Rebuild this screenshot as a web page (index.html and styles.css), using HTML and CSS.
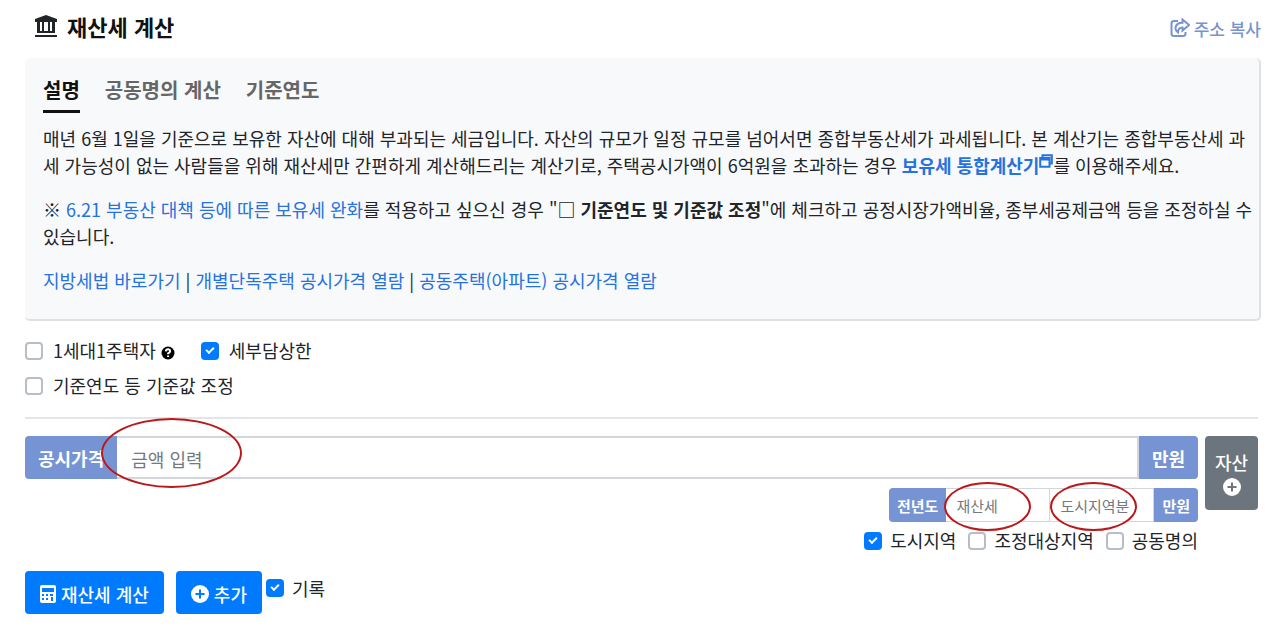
FILE: index.html
```html
<!DOCTYPE html>
<html lang="ko">

<head>
    <meta charset="UTF-8">
    <meta name="viewport" content="width=device-width, initial-scale=1.0">
    <title>재산세 계산</title>
    <link rel="stylesheet" href="styles.css">
</head>

<body>
    <header class="top">
        <h1>
            <svg class="icon-bank" viewBox="0 0 24 24" width="24" height="24" aria-hidden="true">
                <path d="M12 1 1 5v3h22V5zM3 8h3v9H3zM8 8h2v9H8zM14 8h2v9h-2zM18 8h3v9h-3zM3 17h18v2H3zM1 21h22v2H1z" />
            </svg>
            재산세 계산
        </h1>
        <a href="#" class="copy">
            <svg viewBox="0 0 20 20" width="20" height="20" aria-hidden="true">
                <path d="M8 3H4Q1.500 3 1.500 5.500V15.500Q1.500 18 4 18H13Q15.500 18 15.500 15.500V14M12.500 1.500 19 7l-6.500 5.500V9.500Q8 9.500 8 14.500 5 12.500 5.500 9.500 6.500 4.800 12.500 4.800Z" />
            </svg>
            주소 복사
        </a>
    </header>

    <section class="panel">
        <nav class="tabs">
            <a href="#" class="active">설명</a>
            <a href="#">공동명의 계산</a>
            <a href="#">기준연도</a>
        </nav>
        <p>매년 6월 1일을 기준으로 보유한 자산에 대해 부과되는 세금입니다. 자산의 규모가 일정 규모를 넘어서면 종합부동산세가 과세됩니다. 본 계산기는 종합부동산세 과세 가능성이 없는 사람들을 위해 재산세만 간편하게 계산해드리는 계산기로, 주택공시가액이 6억원을 초과하는 경우 <a href="#"><strong>보유세 통합계산기</strong><svg class="icon-window" viewBox="0 0 14 14" width="14" height="14" aria-hidden="true"><path d="M3.500 3.500V1.200h9.300V9.500h-2.300M1.200 4h9.300v8.800H1.200zM1.200 5.500h9.300" /></svg></a>를 이용해주세요.</p>
        <p>※ <a href="#">6.21 부동산 대책 등에 따른 보유세 완화</a>를 적용하고 싶으신 경우 "<strong>□ 기준연도 및 기준값 조정</strong>"에 체크하고 공정시장가액비율, 종부세공제금액 등을 조정하실 수 있습니다.</p>
        <p><a href="#">지방세법 바로가기</a> | <a href="#">개별단독주택 공시가격 열람</a> | <a href="#">공동주택(아파트) 공시가격 열람</a></p>
    </section>

    <form>
        <div class="options">
            <div class="row">
                <label class="check"><input type="checkbox"> 1세대1주택자
                    <svg class="icon-help" viewBox="0 0 14 14" width="14" height="14" aria-hidden="true">
                        <circle cx="7" cy="7" r="6.500" />
                        <path d="M4.800 5.300Q5 3.300 7 3.300T9.100 5.200Q9.100 6.400 7.100 7.300V8.300M7.100 9.500V11" />
                    </svg>
                </label>
                <label class="check"><input type="checkbox" checked> 세부담상한</label>
            </div>
            <div class="row">
                <label class="check"><input type="checkbox"> 기준연도 등 기준값 조정</label>
            </div>
        </div>

        <div class="asset">
            <div class="fields">
                <div class="group">
                    <label for="price" class="addon">공시가격</label>
                    <div class="field mark mark-price"><input type="text" id="price" placeholder="금액 입력"></div>
                    <span class="addon">만원</span>
                </div>
                <div class="group small">
                    <label for="prevTax" class="addon">전년도</label>
                    <div class="field mark mark-tax"><input type="text" id="prevTax" placeholder="재산세"></div>
                    <div class="field mark mark-city"><input type="text" id="prevCity" placeholder="도시지역분" aria-label="도시지역분"></div>
                    <span class="addon">만원</span>
                </div>
                <div class="area">
                    <label class="check"><input type="checkbox" checked> 도시지역</label>
                    <label class="check"><input type="checkbox"> 조정대상지역</label>
                    <label class="check"><input type="checkbox"> 공동명의</label>
                </div>
            </div>
            <button type="button" class="btn-asset">자산
                <svg class="icon-plus" viewBox="0 0 18 18" width="18" height="18" aria-hidden="true">
                    <circle cx="9" cy="9" r="9" />
                    <path d="M9 4.500v9M4.500 9h9" />
                </svg>
            </button>
        </div>

        <div class="actions">
            <button type="button" class="btn">
                <svg class="icon-calc" viewBox="0 0 16 18" width="16" height="18" aria-hidden="true">
                    <path fill-rule="evenodd" d="M2 0h12q2 0 2 2v14q0 2-2 2H2q-2 0-2-2V2Q0 0 2 0zM2 3v4h12V3zM2 9v2h2V9zM6 9v2h2V9zM10 9v2h3V9zM2 13v2h2v-2zM6 13v2h2v-2zM11 12v4h2v-4z" />
                </svg>
                재산세 계산
            </button>
            <button type="button" class="btn">
                <svg class="icon-plus" viewBox="0 0 18 18" width="18" height="18" aria-hidden="true">
                    <circle cx="9" cy="9" r="9" />
                    <path d="M9 4.500v9M4.500 9h9" />
                </svg>
                추가
            </button>
            <label class="check"><input type="checkbox" checked> 기록</label>
        </div>
    </form>
</body>

</html>
```
FILE: styles.css
```css
* {
    box-sizing: border-box;
}

body {
    background-color: white;
    color: #212529;
    font-family: "Noto Sans CJK KR", sans-serif;
    font-size: 18px;
    line-height: 27px;
    margin: 0;
    padding: 12px 19px 16px 25px;
}

a {
    color: #2672df;
    text-decoration: none;
}

input, button {
    font-family: inherit;
}

/* Título */
.top {
    align-items: center;
    display: flex;
    height: 46px;
    justify-content: space-between;
    padding: 0 0 14px 9px;
}

h1 {
    align-items: center;
    color: #111;
    display: flex;
    font-size: 22px;
    gap: 9px;
    margin: 0 0 4px;
}

.icon-bank {
    fill: #212529;
}

.copy {
    align-items: center;
    color: #7893cf;
    display: flex;
    font-size: 17px;
    font-weight: 500;
    gap: 4px;
}

.copy svg {
    fill: none;
    stroke: #7893cf;
    stroke-width: 2;
}

/* Painel */
.panel {
    background-color: #f8f9fb;
    border-bottom: 2px solid #dee0e3;
    border-radius: 5px;
    border-right: 2px solid #dee0e3;
    padding: 17px 6px 25px 18px;
}

.tabs {
    display: flex;
    font-size: 20px;
    font-weight: bold;
    gap: 25px;
    margin-bottom: 12px;
}

.tabs a {
    border-bottom: 3px solid transparent;
    color: #666;
    line-height: 30px;
    padding-bottom: 5px;
}

.tabs .active {
    border-color: #111;
    color: #111;
}

.panel p {
    margin: 0 0 17px;
}

.panel p:last-child {
    margin: 0;
}

.icon-window {
    fill: none;
    stroke: #2672df;
    stroke-width: 2;
    vertical-align: 5px;
}

/* Opções */
form {
    padding-right: 3px;
}

.options {
    border-bottom: 2px solid #e4e5e6;
    display: grid;
    gap: 8px;
    padding: 16px 0 18px;
}

.row {
    display: flex;
    gap: 26px;
}

.check {
    align-items: center;
    display: flex;
    gap: 10px;
}

.check input {
    appearance: none;
    background-color: white;
    border: 2px solid #b8bec5;
    border-radius: 4px;
    display: grid;
    height: 18px;
    margin: 0;
    place-items: center;
    width: 18px;
}

.check input:checked {
    background-color: #007bff;
    border-color: #007bff;
}

.check input:checked::after {
    border: solid white;
    border-width: 0 0 2px 2px;
    content: "";
    height: 3px;
    margin-bottom: 3px;
    transform: rotate(-45deg);
    width: 6px;
}

.icon-help {
    margin: 4px 0 0 -5px;
}

.icon-help path {
    fill: none;
    stroke: white;
    stroke-width: 2;
}

/* Valores */
.asset {
    align-items: start;
    display: grid;
    gap: 7px;
    grid-template-columns: 1fr 53px;
    padding-top: 17px;
}

.group {
    display: flex;
    height: 43px;
}

.addon {
    align-items: center;
    background-color: #7694d3;
    color: white;
    display: flex;
    font-weight: bold;
    padding: 2px 13px 0;
}

.addon:first-child {
    border-radius: 4px 0 0 4px;
}

.addon:last-child {
    border-radius: 0 4px 4px 0;
}

.field {
    flex: 1;
    position: relative;
}

.field input {
    border: 2px solid #d3d6da;
    border-left-width: 0;
    font-size: 18px;
    height: 100%;
    padding: 2px 14px 0;
    width: 100%;
}

.field input::placeholder {
    color: #73797f;
}

.small {
    height: 34px;
    margin: 9px 0 0 auto;
    width: 309px;
}

.small .addon {
    font-size: 15px;
    padding: 0 8px;
}

.small input {
    border-width: 1px 1px 1px 0;
    font-size: 15px;
    padding: 0 10px;
}

/* Círculos de destaque */
.mark::after {
    border: 2px solid #b9191c;
    border-radius: 50%;
    box-sizing: border-box;
    content: "";
    pointer-events: none;
    position: absolute;
    z-index: 1;
}

.mark-price::after {
    height: 70px;
    left: -16px;
    top: -18px;
    width: 141px;
}

.mark-tax::after,
.mark-city::after {
    height: 49px;
    left: -2px;
    top: -6px;
    width: 87px;
}

.mark-city::after {
    left: 0;
}

.area {
    display: flex;
    gap: 12px;
    justify-content: end;
    padding-top: 5px;
}

.area .check,
.actions .check {
    gap: 8px;
}

.btn-asset {
    align-items: center;
    background-color: #6c757d;
    border: 0;
    border-radius: 4px;
    color: white;
    display: flex;
    flex-direction: column;
    font-size: 18px;
    font-weight: 500;
    gap: 4px;
    height: 74px;
    justify-content: center;
    line-height: 24px;
    padding: 0;
}

/* Botões */
.actions {
    display: flex;
    padding-top: 17px;
}

.btn {
    align-items: center;
    background-color: #007bff;
    border: 0;
    border-radius: 4px;
    color: white;
    display: flex;
    font-size: 18px;
    font-weight: 500;
    gap: 5px;
    height: 43px;
    margin-right: 12px;
    padding: 2px 15px 0;
}

.btn svg {
    fill: white;
}

.icon-plus circle {
    fill: white;
}

.icon-plus path {
    stroke: #007bff;
    stroke-width: 2;
}

.btn-asset .icon-plus path {
    stroke: #6c757d;
}

.actions .check {
    height: 34px;
    margin-left: -8px;
}
```
